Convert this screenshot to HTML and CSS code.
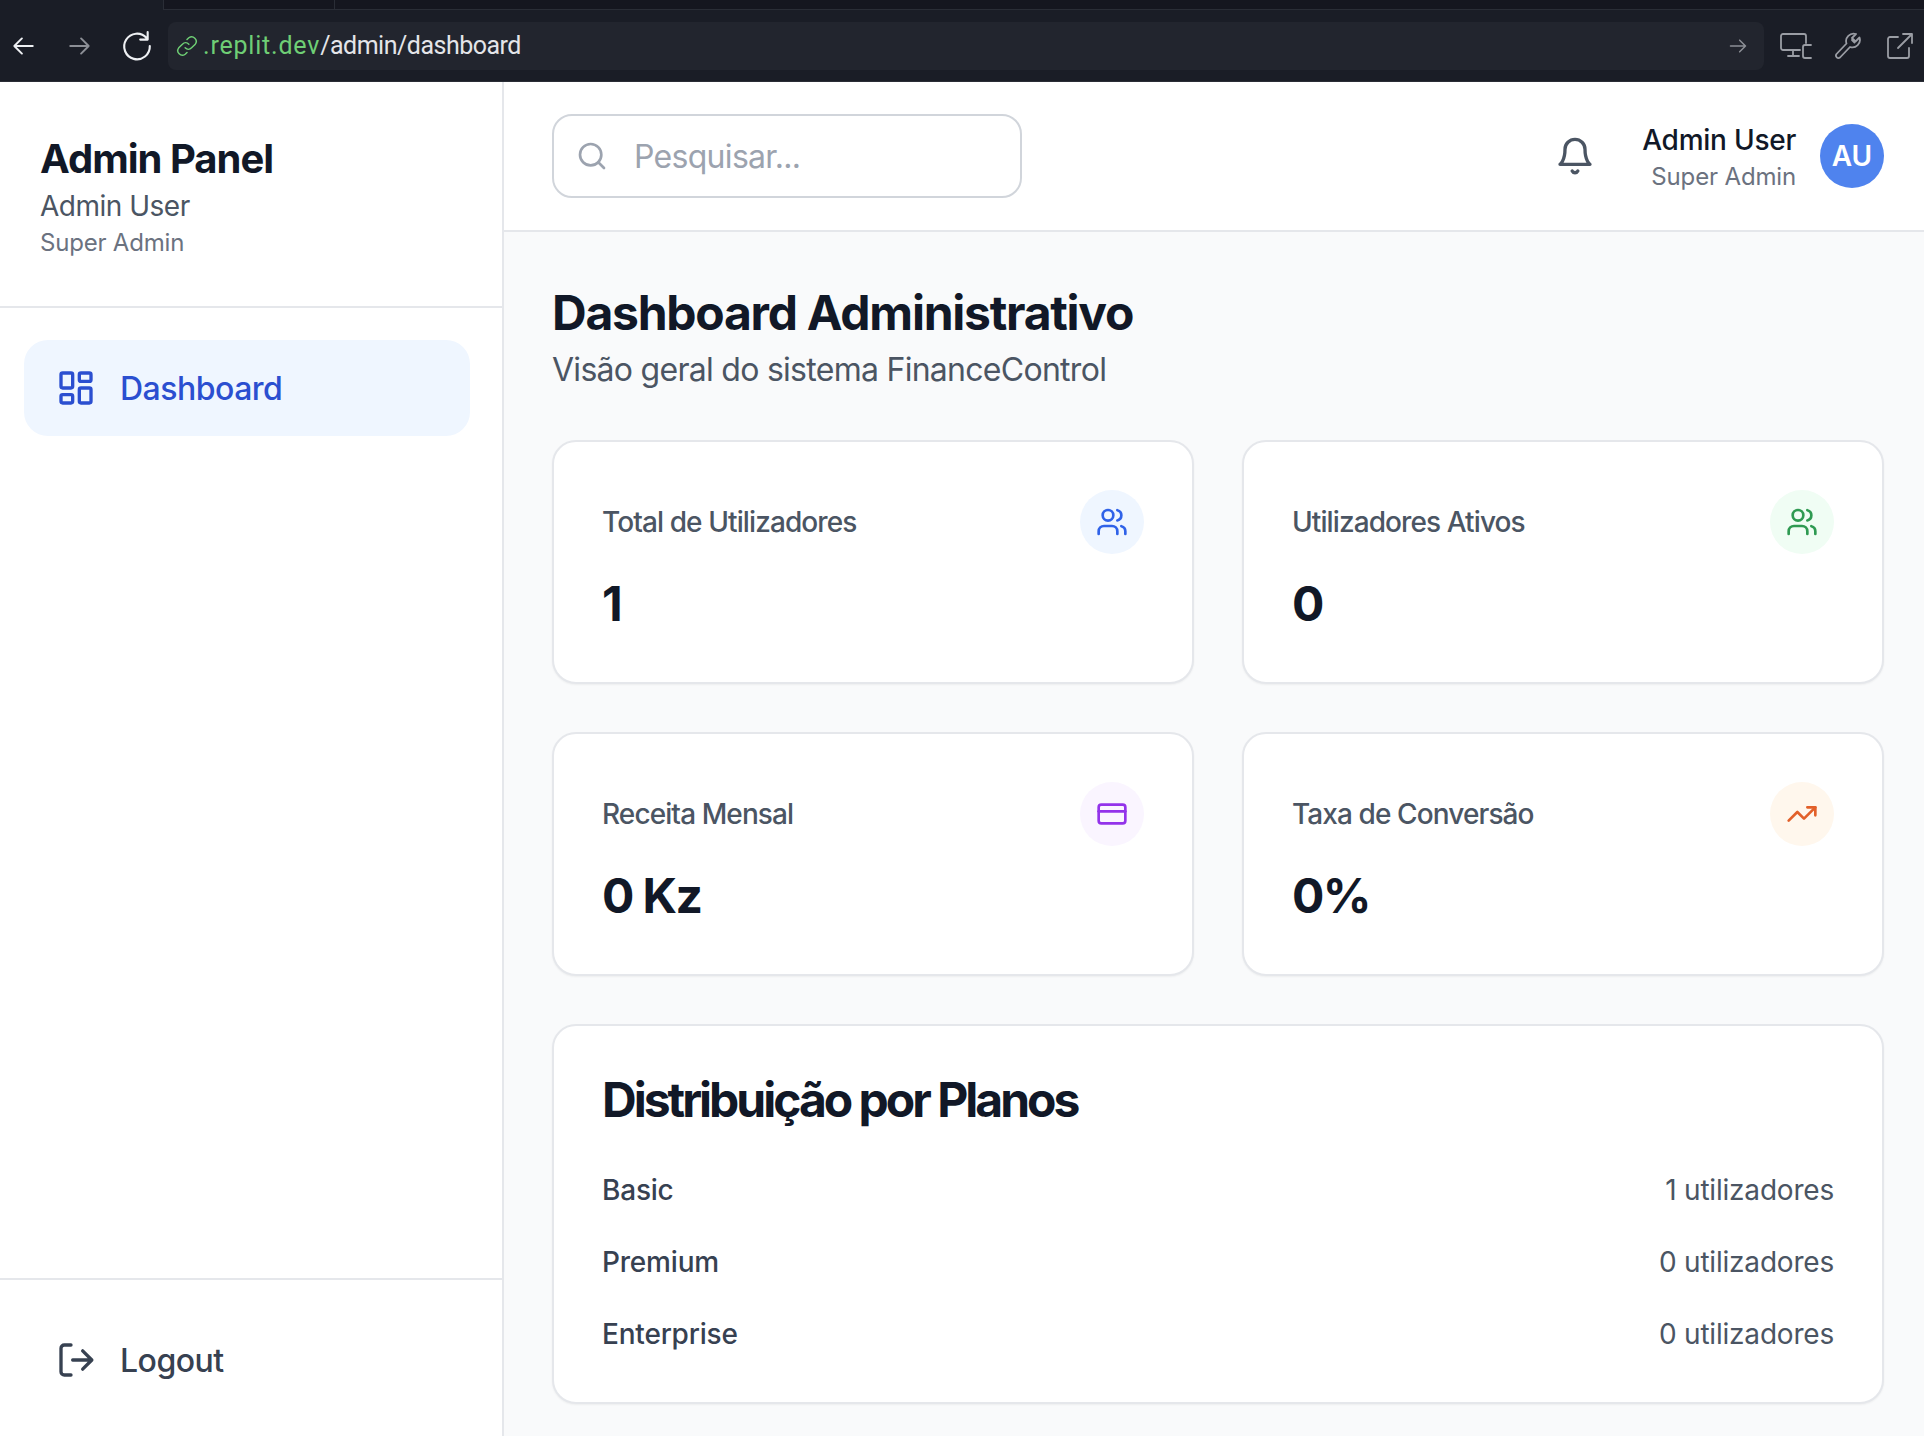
FILE: index.html
```html
<!DOCTYPE html>
<html lang="pt">
<head>
<meta charset="utf-8">
<title>Dashboard Administrativo</title>
<link rel="stylesheet" href="styles.css">
</head>
<body>
<div class="browser">
  <div class="tabstrip"><div class="tabslot tabslot-a"></div><div class="tabslot tabslot-b"></div></div>
  <div class="toolbar">
    <svg class="bicon" viewBox="0 0 24 24"><path d="M21 12H4M11 5l-7 7 7 7"/></svg>
    <svg class="bicon dim" viewBox="0 0 24 24"><path d="M3 12h17M13 5l7 7-7 7"/></svg>
    <svg class="bicon reload" viewBox="0 0 30 30"><path d="M24 7.500A12 12 0 1 0 27 15M25 2v7h-7"/></svg>
    <div class="urlbar">
      <svg class="link" viewBox="0 0 24 24"><path d="M10 14a5 5 0 0 0 7 0l4-4a5 5 0 0 0-7-7l-2 2M14 10a5 5 0 0 0-7 0l-4 4a5 5 0 0 0 7 7l2-2"/></svg>
      <span class="url"><span class="host">.replit.dev</span>/admin/dashboard</span>
      <svg class="go" viewBox="0 0 24 24"><path d="M3 12h18M14 5l7 7-7 7"/></svg>
    </div>
    <div class="tools">
      <svg class="tool" viewBox="0 0 32 26"><path d="M20 17H3a2 2 0 0 1-2-2V3a2 2 0 0 1 2-2h21a2 2 0 0 1 2 2v7M13 17v6M8 23h11M31 12h-6a2 2 0 0 0-2 2v9a2 2 0 0 0 2 2h6"/></svg>
      <svg class="tool" viewBox="0 0 28 28"><path d="M18 8l2.500 2.500M25.500 5.500l-4 4-3.500-3.500 4-4a7.500 7.500 0 0 0-9.500 9.500L2.500 22a2.500 2.500 0 0 0 3.500 3.500L16 15a7.500 7.500 0 0 0 9.500-9.500z"/></svg>
      <svg class="tool" viewBox="0 0 28 28"><path d="M12 5H4a2 2 0 0 0-2 2v17a2 2 0 0 0 2 2h17a2 2 0 0 0 2-2v-8M12 16L26 2M17 2h9v9"/></svg>
    </div>
  </div>
</div>
<div class="app">
  <aside class="sidebar">
    <div class="brand">
      <h1 class="brand-title">Admin Panel</h1>
      <div class="brand-user">Admin User</div>
      <div class="brand-role">Super Admin</div>
    </div>
    <nav class="nav">
      <a class="nav-item active">
        <svg class="nav-icon" viewBox="0 0 24 24"><rect x="3" y="3" width="7" height="9" rx="1"/><rect x="14" y="3" width="7" height="5" rx="1"/><rect x="14" y="12" width="7" height="9" rx="1"/><rect x="3" y="16" width="7" height="5" rx="1"/></svg>
        <span>Dashboard</span>
      </a>
    </nav>
    <div class="logout">
      <a class="nav-item logout-item">
        <svg class="nav-icon" viewBox="0 0 24 24"><path d="M9 3H5a2 2 0 0 0-2 2v14a2 2 0 0 0 2 2h4"/><path d="M10 12h11M16 6.500l5.500 5.500-5.500 5.500"/></svg>
        <span>Logout</span>
      </a>
    </div>
  </aside>
  <div class="content">
    <header class="topbar">
      <div class="search">
        <svg class="search-icon" viewBox="0 0 24 24"><circle cx="11" cy="11" r="8"/><path d="M21 21l-4.300-4.300"/></svg>
        <span class="search-text">Pesquisar...</span>
      </div>
      <div class="top-right">
        <svg class="bell" viewBox="0 0 24 24"><path d="M6 8a6 6 0 0 1 12 0c0 7 3 9 3 9H3s3-2 3-9"/><path d="M10.300 21a1.900 1.900 0 0 0 3.400 0"/></svg>
        <div class="who">
          <div class="who-name">Admin User</div>
          <div class="who-role">Super Admin</div>
        </div>
        <div class="avatar">AU</div>
      </div>
    </header>
    <main class="main">
      <h2 class="page-title">Dashboard Administrativo</h2>
      <p class="page-sub">Visão geral do sistema FinanceControl</p>
      <section class="stats">
        <div class="card">
          <div class="card-top">
            <span class="card-label">Total de Utilizadores</span>
            <span class="badge badge-blue"><svg class="badge-icon" viewBox="0 0 24 24"><path d="M16 21v-2a4 4 0 0 0-4-4H6a4 4 0 0 0-4 4v2"/><circle cx="9" cy="7" r="4"/><path d="M22 21v-2a4 4 0 0 0-3-3.870M16 3.130a4 4 0 0 1 0 7.750"/></svg></span>
          </div>
          <div class="card-value">1</div>
        </div>
        <div class="card">
          <div class="card-top">
            <span class="card-label">Utilizadores Ativos</span>
            <span class="badge badge-green"><svg class="badge-icon" viewBox="0 0 24 24"><path d="M16 21v-2a4 4 0 0 0-4-4H6a4 4 0 0 0-4 4v2"/><circle cx="9" cy="7" r="4"/><path d="M22 21v-2a4 4 0 0 0-3-3.870M16 3.130a4 4 0 0 1 0 7.750"/></svg></span>
          </div>
          <div class="card-value">0</div>
        </div>
        <div class="card">
          <div class="card-top">
            <span class="card-label">Receita Mensal</span>
            <span class="badge badge-purple"><svg class="badge-icon" viewBox="0 0 24 24"><rect x="2" y="5" width="20" height="14" rx="2"/><path d="M2 10h20"/></svg></span>
          </div>
          <div class="card-value">0 Kz</div>
        </div>
        <div class="card">
          <div class="card-top">
            <span class="card-label">Taxa de Conversão</span>
            <span class="badge badge-orange"><svg class="badge-icon" viewBox="0 0 24 24"><path d="M22 7l-8.500 8.500-5-5L2 17"/><path d="M16 7h6v6"/></svg></span>
          </div>
          <div class="card-value">0%</div>
        </div>
      </section>
      <section class="plans">
        <h3 class="plans-title">Distribuição por Planos</h3>
        <div class="plan-row"><span class="plan-name">Basic</span><span class="plan-count">1 utilizadores</span></div>
        <div class="plan-row"><span class="plan-name">Premium</span><span class="plan-count">0 utilizadores</span></div>
        <div class="plan-row"><span class="plan-name">Enterprise</span><span class="plan-count">0 utilizadores</span></div>
      </section>
    </main>
  </div>
</div>
</body>
</html>
```
FILE: styles.css
```css
* { box-sizing: border-box; }
html, body { margin: 0; height: 1436px; overflow: hidden; }
body { font-family: Inter, "Liberation Sans", sans-serif; background: #fff; color: #111827; display: flex; flex-direction: column; }
h1, h2, h3, p { margin: 0; }
svg { fill: none; stroke: currentColor; stroke-linecap: round; stroke-linejoin: round; flex: none; display: block; }

.browser { height: 82px; background: #1a1d26; flex: none; border-bottom: 1px solid #2a2d36; }
.tabstrip { height: 10px; display: flex; padding-left: 163px; }
.tabslot { height: 10px; background: #15161f; border-bottom: 1px solid #2a2d36; }
.tabslot-a { width: 172px; border-left: 1px solid #2a2d36; border-right: 1px solid #2a2d36; }
.tabslot-b { flex: 1; }
.toolbar { height: 71px; display: flex; align-items: center; padding-left: 10px; }
.bicon { width: 26px; height: 26px; color: #eef0f3; stroke-width: 1.8; margin-right: 31px; }
.bicon.dim { color: #8c8f96; }
.bicon.reload { width: 32px; height: 32px; margin-right: 15px; margin-left: -3px; stroke-width: 2; }
.urlbar { width: 1596px; height: 48px; background: #22252e; border-radius: 8px; display: flex; align-items: center; padding: 0 16px 0 8px; flex: none; }
.link { width: 22px; height: 22px; color: #6fcf75; stroke-width: 1.6; margin-right: 5px; }
.url { font-family: Roboto, Inter, sans-serif; font-size: 25px; letter-spacing: -0.5px; color: #e4e5e9; flex: 1; }
.host { color: #6fcf75; letter-spacing: 0.8px; }
.go { width: 20px; height: 20px; color: #8c8f96; stroke-width: 1.8; }
.tools { display: flex; align-items: center; gap: 20px; margin-left: 16px; }
.tool { width: 32px; height: 28px; color: #9a9da4; stroke-width: 1.8; }

.app { flex: 1; display: flex; min-height: 0; }
.sidebar { width: 504px; flex: none; background: #fff; border-right: 2px solid #e5e7eb; display: flex; flex-direction: column; }
.brand { height: 226px; border-bottom: 2px solid #e5e7eb; padding: 53px 40px 0; }
.brand-title { font-size: 40px; line-height: 48px; font-weight: 700; letter-spacing: -1px; color: #111827; }
.brand-user { font-size: 28px; line-height: 36px; letter-spacing: -0.5px; color: #4b5563; margin-top: 5px; }
.brand-role { font-size: 24px; line-height: 32px; letter-spacing: -0.2px; color: #6b7280; margin-top: 3px; }
.nav { flex: 1; padding: 32px 32px 0 24px; }
.nav-item { height: 96px; display: flex; align-items: center; gap: 24px; padding: 0 32px; border-radius: 24px; font-size: 32px; font-weight: 500; letter-spacing: -0.5px; }
.nav-item.active { background: #eff6ff; color: #2b4fd0; }
.nav-icon { width: 40px; height: 40px; stroke-width: 2; }
.logout { height: 158px; border-top: 2px solid #e5e7eb; padding: 32px 32px 0 24px; }
.logout-item { color: #374151; }

.content { flex: 1; min-width: 0; display: flex; flex-direction: column; background: #f9fafb; }
.topbar { height: 150px; flex: none; background: #fff; border-bottom: 2px solid #e5e7eb; display: flex; align-items: center; justify-content: space-between; padding: 0 40px 0 48px; }
.search { width: 470px; height: 84px; border: 2px solid #d1d5db; border-radius: 20px; display: flex; align-items: center; padding-left: 22px; gap: 26px; }
.search-icon { width: 32px; height: 32px; color: #9ca3af; stroke-width: 2; }
.search-text { font-size: 32px; letter-spacing: -0.7px; color: #9ca3af; }
.top-right { display: flex; align-items: center; }
.bell { width: 40px; height: 40px; color: #4b5563; stroke-width: 2; margin-right: 47px; }
.who { text-align: right; margin-right: 24px; padding-top: 2px; }
.who-name { font-size: 28px; line-height: 36px; font-weight: 500; letter-spacing: -0.25px; color: #111827; }
.who-role { font-size: 24px; line-height: 32px; letter-spacing: -0.15px; color: #6b7280; margin-top: 3px; }
.avatar { width: 64px; height: 64px; border-radius: 50%; background: #4f83ee; color: #fff; font-size: 28px; font-weight: 600; display: flex; align-items: center; justify-content: center; }

.main { flex: 1; padding: 53px 40px 0 48px; }
.page-title { font-size: 48px; line-height: 56px; font-weight: 700; letter-spacing: -1.25px; color: #111827; }
.page-sub { font-size: 32px; line-height: 40px; letter-spacing: -0.72px; color: #4b5563; margin-top: 9px; }
.stats { display: grid; grid-template-columns: 1fr 1fr; gap: 48px; margin-top: 50px; }
.card { height: 244px; background: #fff; border: 2px solid #e5e7eb; border-radius: 24px; padding: 48px; box-shadow: 0 1px 2px rgba(0,0,0,.05); }
.card-top { display: flex; align-items: center; justify-content: space-between; height: 64px; }
.card-label { font-size: 28px; font-weight: 500; letter-spacing: -0.9px; color: #4b5563; }
.badge { width: 64px; height: 64px; border-radius: 50%; display: flex; align-items: center; justify-content: center; }
.badge-blue { background: #eff6ff; color: #2f62e8; }
.badge-green { background: #f0fdf4; color: #2f9a52; }
.badge-purple { background: #faf5ff; color: #9333ea; }
.badge-orange { background: #fff7ed; color: #e2602a; }
.badge-icon { width: 32px; height: 32px; stroke-width: 2; }
.card-value { font-size: 48px; line-height: 56px; font-weight: 700; letter-spacing: -1.6px; color: #111827; margin-top: 22px; }
.plans { height: 380px; background: #fff; border: 2px solid #e5e7eb; border-radius: 24px; padding: 46px 48px 0; margin-top: 48px; box-shadow: 0 1px 2px rgba(0,0,0,.05); }
.plans-title { font-size: 48px; line-height: 56px; font-weight: 700; letter-spacing: -3px; color: #111827; margin-bottom: 26px; }
.plan-row { display: flex; justify-content: space-between; align-items: center; height: 72px; font-size: 28px; letter-spacing: -0.2px; }
.plan-name { font-weight: 500; color: #374151; }
.plan-count { color: #4b5563; letter-spacing: -0.2px; }
```
